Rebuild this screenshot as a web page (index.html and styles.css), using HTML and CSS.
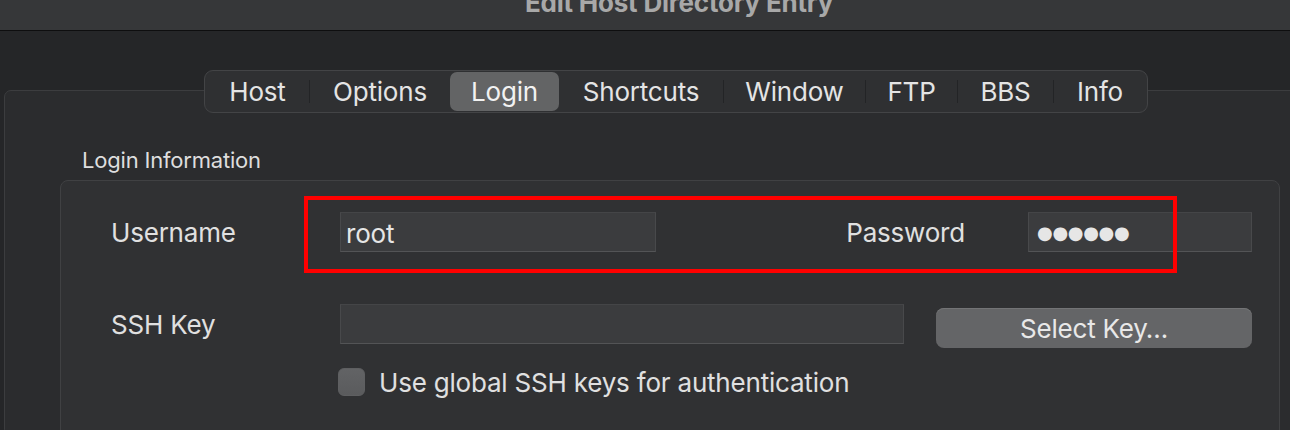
FILE: index.html
```html
<!DOCTYPE html>
<html>
<head>
<meta charset="utf-8">
<link rel="stylesheet" href="styles.css">
</head>
<body>
<div class="titlebar"><span class="title">Edit Host Directory Entry</span></div>
<div class="tabview">
  <div class="tabs">
    <div class="seg">
      <span class="tab t-host">Host</span><span class="sep"></span><span class="tab t-options">Options</span><span class="tab t-login selected">Login</span><span class="tab t-shortcuts">Shortcuts</span><span class="sep"></span><span class="tab t-window">Window</span><span class="sep"></span><span class="tab t-ftp">FTP</span><span class="sep"></span><span class="tab t-bbs">BBS</span><span class="sep"></span><span class="tab t-info">Info</span>
    </div>
  </div>
  <div class="tabpanel">
    <div class="section-label">Login Information</div>
    <div class="group">
      <div class="row">
        <span class="label">Username</span>
        <div class="field f-user"><span class="value">root</span></div>
        <span class="label-right">Password</span>
        <div class="field f-pass"><span class="dots">●●●●●●</span></div>
      </div>
      <div class="row row-key">
        <span class="label">SSH Key</span>
        <div class="field f-key"></div>
        <div class="button">Select Key…</div>
      </div>
      <div class="row row-check">
        <span class="checkbox"></span>
        <span class="check-text">Use global SSH keys for authentication</span>
      </div>
      <div class="highlight"></div>
    </div>
  </div>
</div>
</body>
</html>
```
FILE: styles.css
```css
html, body {
  margin: 0;
  padding: 0;
}
body {
  width: 1290px;
  height: 430px;
  overflow: hidden;
  background: #252628;
  font-family: Inter, "Noto Sans", sans-serif;
  color: #e0e0e0;
  letter-spacing: -0.2px;
}
.titlebar {
  height: 30px;
  background: #363739;
  border-bottom: 1px solid #0e0e0f;
  overflow: hidden;
  display: flex;
  justify-content: center;
  padding-left: 68px;
}
.title {
  font-weight: 700;
  font-size: 26px;
  line-height: 26px;
  color: #a8a8a8;
  margin-top: -10px;
}
.tabview {
  margin: 39px -58px 0 4px;
}
.tabs {
  display: flex;
  justify-content: center;
  position: relative;
  z-index: 1;
  margin-bottom: -23px;
}
.seg {
  display: flex;
  height: 43px;
  box-sizing: border-box;
  border: 1px solid #434446;
  border-radius: 9px;
  background: #2f3032;
  padding: 1px;
}
.tab {
  display: flex;
  align-items: center;
  justify-content: center;
  font-size: 26px;
  color: #e4e4e4;
  height: 100%;
}
.tab.selected {
  background: #636465;
  border-radius: 7px;
  color: #f2f2f2;
}
.t-host { width: 103px; }
.t-options { width: 140px; }
.t-login { width: 109px; }
.t-shortcuts { width: 164px; }
.t-window { width: 141px; }
.t-ftp { width: 91px; }
.t-bbs { width: 95px; }
.t-info { width: 92px; }
.sep {
  width: 1px;
  height: 23px;
  align-self: center;
  background: #232426;
}
.tabpanel {
  border: 1px solid #3c3d3f;
  border-radius: 7px;
  background: #2b2c2e;
  padding: 56px 0 0 55px;
  height: 346px;
  box-sizing: border-box;
}
.section-label {
  font-size: 22px;
  line-height: 26px;
  margin-left: 22px;
  color: #dedede;
}
.group {
  position: relative;
  margin-top: 7px;
  width: 1220px;
  height: 258px;
  box-sizing: border-box;
  border: 1px solid #404143;
  border-radius: 8px;
  background: #303133;
  padding: 31px 27px 0 50px;
}
.row {
  display: flex;
  align-items: center;
  height: 40px;
}
.label {
  width: 229px;
  font-size: 26px;
  line-height: 40px;
  padding-top: 1px;
}
.label-right {
  margin-left: auto;
  margin-right: 63px;
  font-size: 26px;
  padding-top: 1px;
}
.field {
  height: 40px;
  box-sizing: border-box;
  background: #3b3c3e;
  border: 1px solid #48494b;
  border-top-color: #444547;
  border-bottom-color: #535456;
  display: flex;
  align-items: center;
}
.f-user { width: 316px; }
.f-pass { width: 224px; }
.f-key { width: 564px; }
.value {
  font-size: 26px;
  padding-left: 5px;
  padding-top: 2px;
  color: #e6e6e6;
}
.dots {
  font-family: "DejaVu Sans", sans-serif;
  font-size: 18px;
  letter-spacing: -0.3px;
  padding-left: 8px;
  color: #e6e6e6;
}
.row-key {
  margin-top: 52px;
  align-items: flex-start;
}
.button {
  margin-left: 32px;
  margin-top: 4px;
  width: 316px;
  height: 40px;
  border-radius: 8px;
  background: #646567;
  box-shadow: inset 0 1px 0 #737476;
  display: flex;
  align-items: center;
  justify-content: center;
  font-size: 26px;
  color: #e8e8e8;
}
.row-check {
  margin-top: 24px;
  height: 28px;
}
.checkbox {
  margin-left: 227px;
  width: 27px;
  height: 28px;
  box-sizing: border-box;
  border-radius: 6px;
  background: linear-gradient(#626365, #5a5b5d);
  border: 1px solid #5e5f61;
}
.check-text {
  margin-left: 14px;
  font-size: 26px;
}
.highlight {
  position: absolute;
  left: 243px;
  top: 15px;
  width: 873px;
  height: 77px;
  box-sizing: border-box;
  border: 4px solid #ff0000;
}
```
